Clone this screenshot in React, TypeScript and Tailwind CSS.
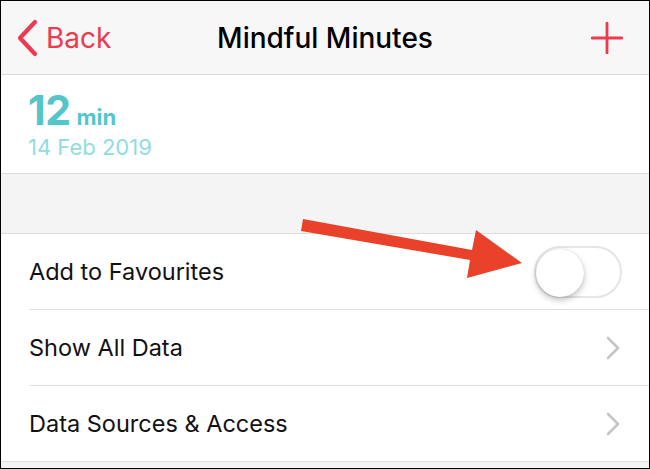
import React from "react";

function ChevronRight() {
  return (
    <svg width="16" height="24" viewBox="0 0 16 24" className="shrink-0">
      <path d="M3 2 L13 12 L3 22" fill="none" stroke="#c4c4c9" strokeWidth="2.6" strokeLinecap="round" strokeLinejoin="round" />
    </svg>
  );
}

function Row({ label, last, children }: { label: string; last?: boolean; children: React.ReactNode }) {
  return (
    <div className={`h-[76px] flex items-center pl-[28px] ${last ? "border-b border-[#e1e1e4]" : ""}`}>
      <div className={`flex-1 h-full flex items-center justify-between pr-[28px] ${last ? "" : "border-b border-[#e1e1e4]"}`}>
        <span className="text-[23.5px] text-[#111]">{label}</span>
        {children}
      </div>
    </div>
  );
}

export default function App() {
  return (
    <div
      className="relative w-[650px] h-[469px] border border-black bg-[#f4f4f5] overflow-hidden"
      style={{ fontFamily: "Inter, 'Liberation Sans', sans-serif" }}
    >
      {/* nav bar */}
      <div className="h-[74px] bg-[#f7f7f7] border-b border-[#d9d9dc] flex items-center justify-between pl-[14px] pr-[15px]">
        <div className="flex items-center gap-[7px] text-[#ec3a50]">
          <svg width="24" height="38" viewBox="0 0 24 38">
            <path d="M20 3 L5 19 L20 35" fill="none" stroke="#ec3a50" strokeWidth="4.2" strokeLinecap="round" strokeLinejoin="round" />
          </svg>
          <span className="text-[28px] leading-none">Back</span>
        </div>
        <span className="absolute left-0 right-0 text-center text-[28px] font-medium text-black pointer-events-none">Mindful Minutes</span>
        <svg width="32" height="32" viewBox="0 0 32 32" className="mr-[11px]">
          <path d="M16 1 V31 M1 16 H31" stroke="#ec3a50" strokeWidth="2.8" strokeLinecap="round" />
        </svg>
      </div>

      {/* summary */}
      <div className="h-[99px] bg-white border-b border-[#dcdcdf] pl-[27px] pt-[15px]">
        <div className="flex items-baseline gap-[6px] text-[#53c6ca] font-bold leading-none">
          <span className="text-[41px] tracking-[-0.5px]">12</span>
          <span className="text-[22px]">min</span>
        </div>
        <div className="mt-[5px] text-[22px] leading-none text-[#8fdde1]">14 Feb 2019</div>
      </div>

      {/* spacer */}
      <div className="h-[60px] border-b border-[#dcdcdf]" />

      <div className="bg-white">
        <Row label="Add to Favourites">
          <div className="relative w-[88px] h-[52px] rounded-full border-[2px] border-[#e5e5e7] bg-white -mr-[1px]">
            <div className="absolute left-0 top-[1px] w-[48px] h-[48px] rounded-full bg-white shadow-[0_3px_6px_rgba(0,0,0,0.25),0_0_1px_rgba(0,0,0,0.2)]" />
          </div>
        </Row>
        <Row label="Show All Data">
          <ChevronRight />
        </Row>
        <Row label="Data Sources &amp; Access" last>
          <ChevronRight />
        </Row>
      </div>

      {/* annotation arrow */}
      <svg className="absolute left-0 top-0 pointer-events-none" width="650" height="469" viewBox="0 0 650 469">
        <polygon points="302,218 471,249 475,229 521,262 466,277 469,259 300,230" fill="#e9412a" />
      </svg>
    </div>
  );
}
